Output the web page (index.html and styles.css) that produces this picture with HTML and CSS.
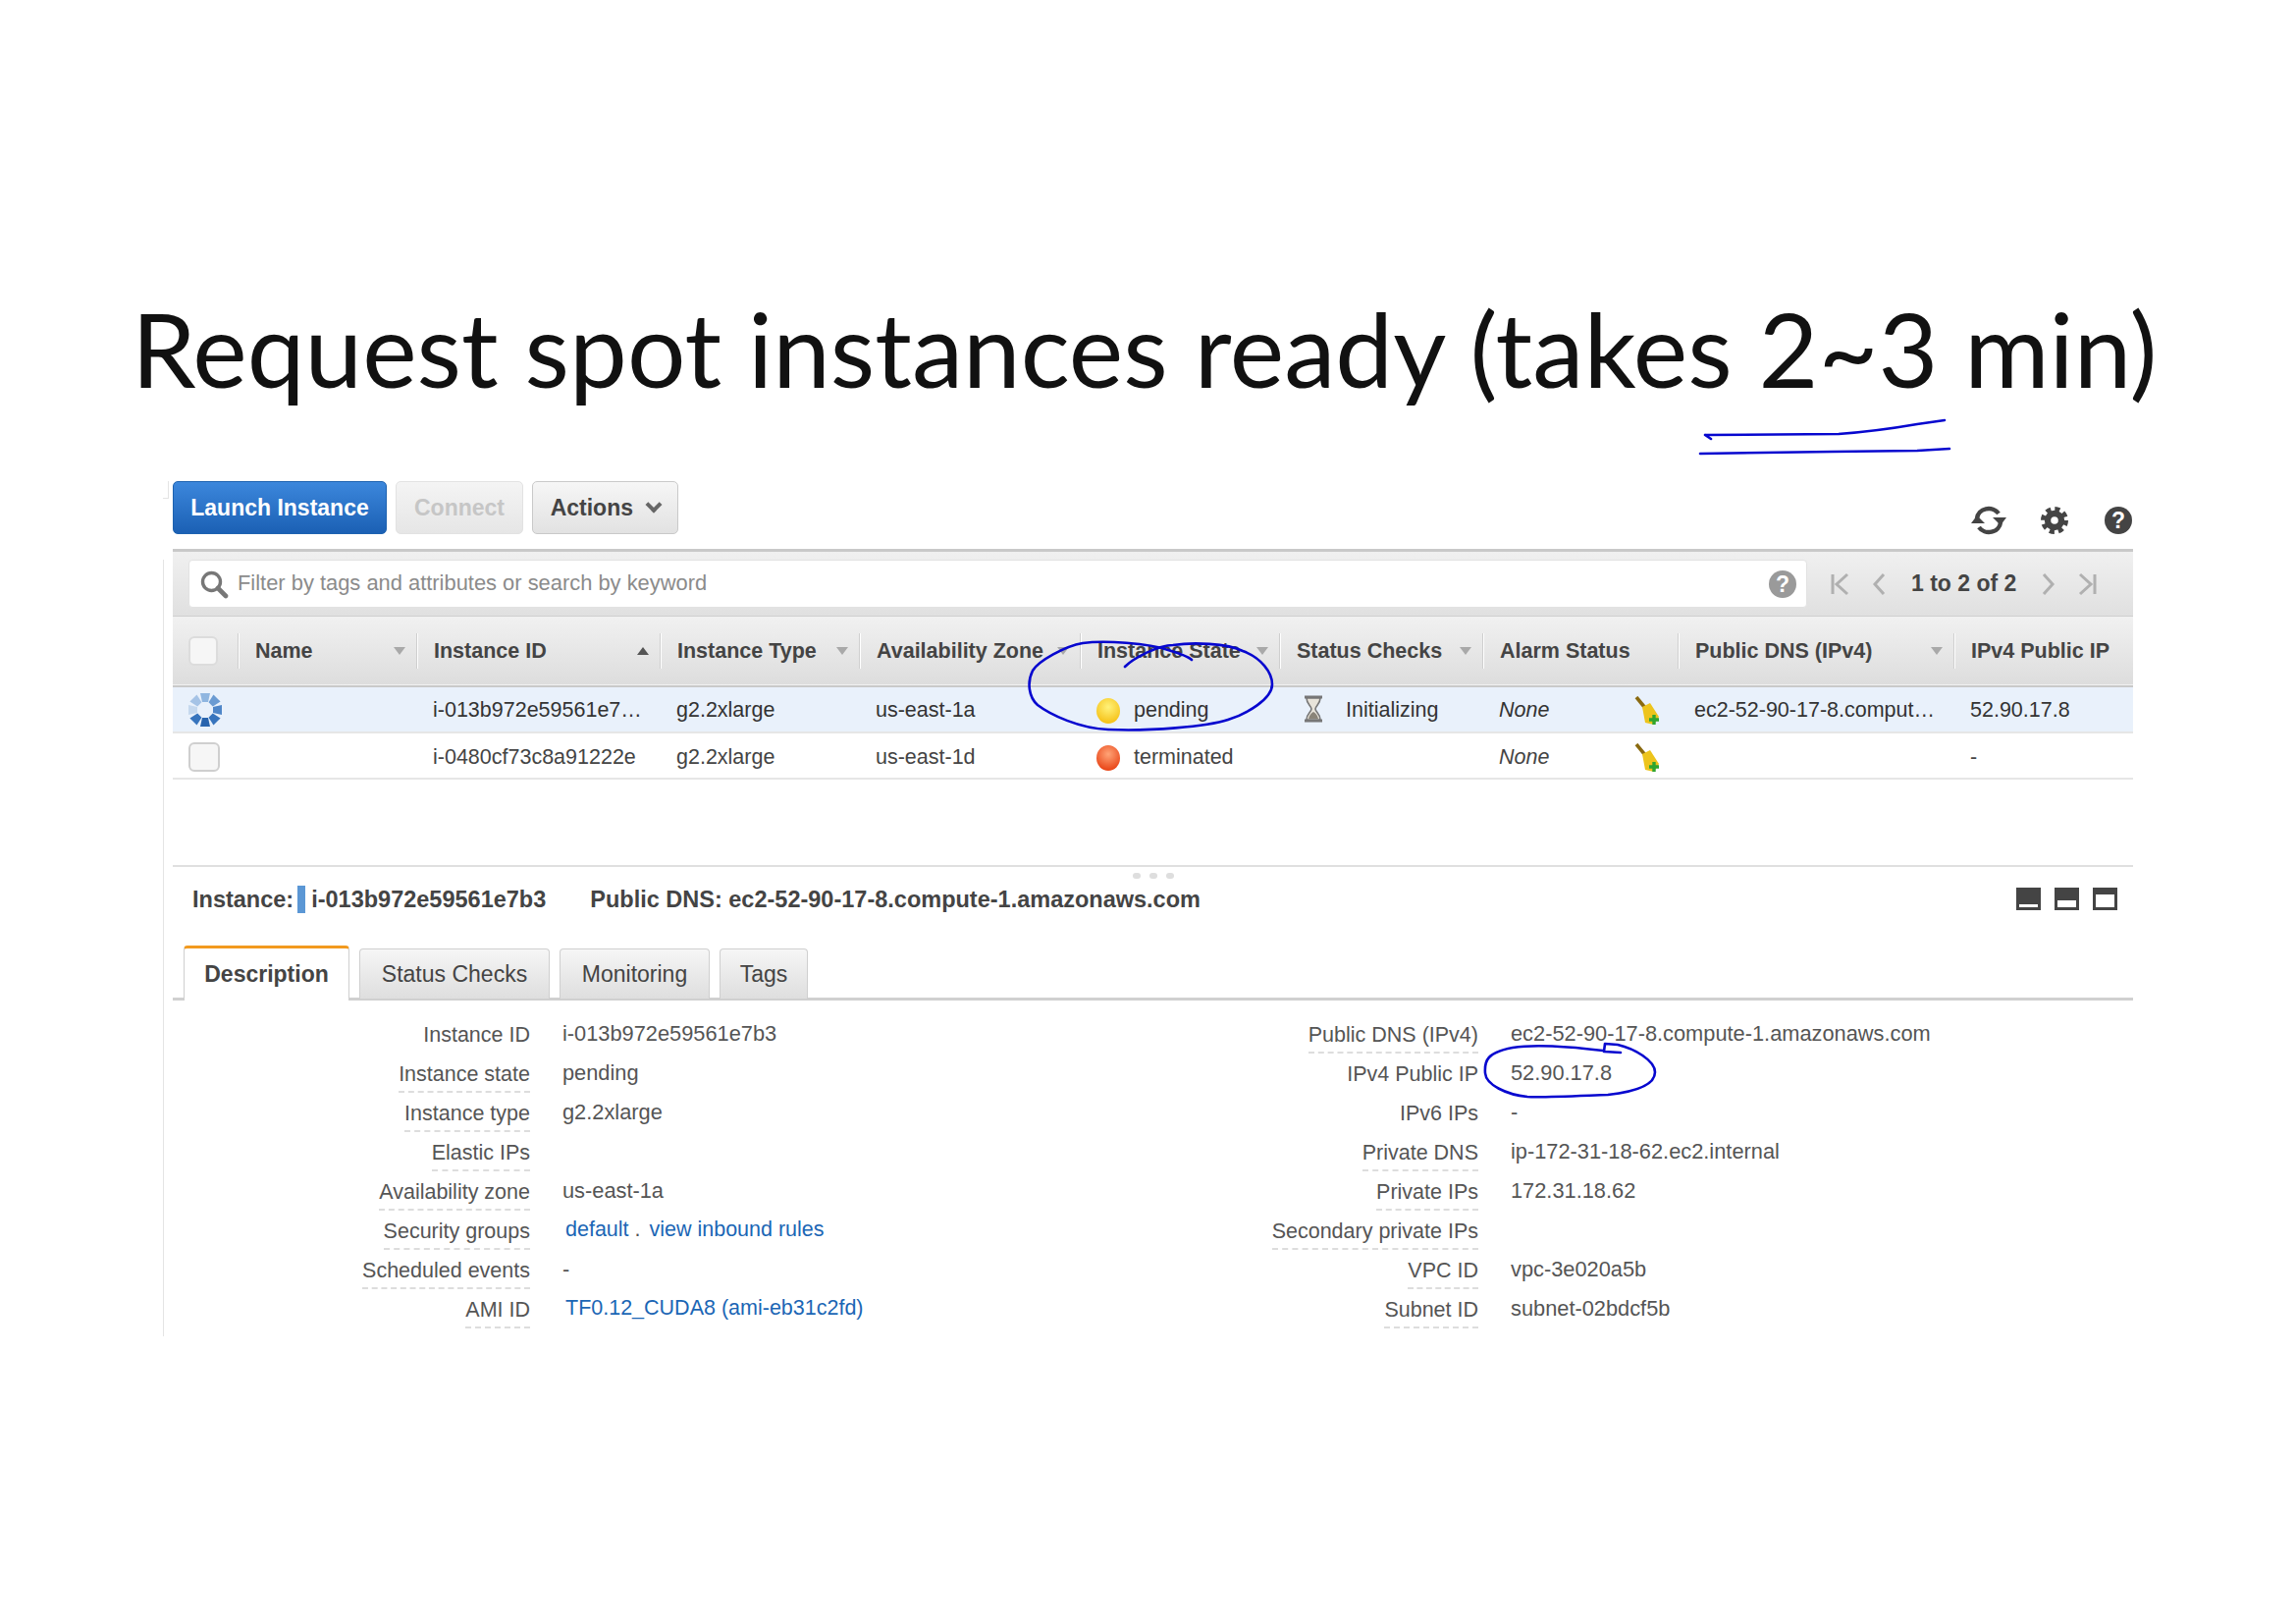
FILE: index.html
```html
<!DOCTYPE html>
<html lang="en">
<head>
    <meta charset="UTF-8">
    <title>Request spot instances ready</title>
    <link rel="stylesheet" href="styles.css">
</head>
<body>
    <div class="slide">
        <h1 class="slide-title">Request spot instances ready (takes 2~3 min)</h1>

        <div class="toolbar">
            <button class="btn btn-primary">Launch Instance</button>
            <button class="btn btn-disabled">Connect</button>
            <button class="btn btn-actions">Actions <span class="chevron"></span></button>
            <div class="toolbar-icons">
                <svg class="icon-refresh" viewBox="0 0 36 32" width="36" height="32">
                    <path d="M6 14a12 11 0 0 1 22-5" fill="none" stroke="#444" stroke-width="4.4"/>
                    <path d="M30 18a12 11 0 0 1-22 5" fill="none" stroke="#444" stroke-width="4.4"/>
                    <path d="M22 13l14 0-6 8z" fill="#444"/>
                    <path d="M14 19l-14 0 6-8z" fill="#444"/>
                </svg>
                <svg class="icon-gear" viewBox="0 0 28 28" width="28" height="28">
                    <circle cx="14" cy="14" r="7" fill="none" stroke="#444" stroke-width="6.4"/>
                    <circle cx="14" cy="14" r="11.5" fill="none" stroke="#444" stroke-width="5" stroke-dasharray="5 4.03"/>
                </svg>
                <span class="help-circle help-dark">?</span>
            </div>
        </div>

        <section class="console">
            <div class="filter-bar">
                <div class="search-box">
                    <svg viewBox="0 0 30 30" width="30" height="30">
                        <circle cx="12.5" cy="12.5" r="9" fill="none" stroke="#777" stroke-width="3.4"/>
                        <path d="M19 19l8 8" stroke="#777" stroke-width="4.6" stroke-linecap="round"/>
                    </svg>
                    <span class="search-placeholder">Filter by tags and attributes or search by keyword</span>
                    <span class="help-circle help-grey">?</span>
                </div>
                <div class="pager">
                    <svg viewBox="0 0 20 26" width="20" height="26"><path d="M2 3v20M17 3L6 13l11 10" fill="none" stroke="#b0b0b0" stroke-width="3"/></svg>
                    <svg class="pager-prev" viewBox="0 0 14 26" width="14" height="26"><path d="M12 3L3 13l9 10" fill="none" stroke="#b0b0b0" stroke-width="3"/></svg>
                    <span class="pager-text">1 to 2 of 2</span>
                    <svg class="pager-next" viewBox="0 0 14 26" width="14" height="26"><path d="M2 3l9 10-9 10" fill="none" stroke="#b0b0b0" stroke-width="3"/></svg>
                    <svg viewBox="0 0 20 26" width="20" height="26"><path d="M18 3v20M3 3l11 10L3 23" fill="none" stroke="#b0b0b0" stroke-width="3"/></svg>
                </div>
            </div>

            <table class="instances">
                <colgroup>
                    <col class="col-check">
                    <col class="col-name">
                    <col class="col-id">
                    <col class="col-type">
                    <col class="col-zone">
                    <col class="col-state">
                    <col class="col-status">
                    <col class="col-alarm">
                    <col class="col-dns">
                    <col class="col-ip">
                </colgroup>
                <thead>
                    <tr>
                        <th class="cell-check"><span class="checkbox"></span></th>
                        <th><div class="th-inner">Name <span class="sort"></span></div></th>
                        <th><div class="th-inner">Instance ID <span class="sort sort-up"></span></div></th>
                        <th><div class="th-inner">Instance Type <span class="sort"></span></div></th>
                        <th><div class="th-inner">Availability Zone <span class="sort"></span></div></th>
                        <th><div class="th-inner">Instance State <span class="sort"></span></div></th>
                        <th><div class="th-inner">Status Checks <span class="sort"></span></div></th>
                        <th><div class="th-inner">Alarm Status</div></th>
                        <th><div class="th-inner">Public DNS (IPv4) <span class="sort"></span></div></th>
                        <th class="th-last"><div class="th-inner">IPv4 Public IP</div></th>
                    </tr>
                </thead>
                <tbody>
                    <tr class="row-selected">
                        <td class="cell-check">
                            <svg viewBox="0 0 36 36" width="36" height="36">
                                <path d="M13 1h10l-2 9h-6z" fill="#8fb6e0"/>
                                <path d="M13 1h10l-2 9h-6z" transform="rotate(45 18 18)" fill="#6b9bd2"/>
                                <path d="M13 1h10l-2 9h-6z" transform="rotate(90 18 18)" fill="#4f86c8"/>
                                <path d="M13 1h10l-2 9h-6z" transform="rotate(135 18 18)" fill="#3774bd"/>
                                <path d="M13 1h10l-2 9h-6z" transform="rotate(180 18 18)" fill="#2864ae"/>
                                <path d="M13 1h10l-2 9h-6z" transform="rotate(225 18 18)" fill="#3774bd"/>
                                <path d="M13 1h10l-2 9h-6z" transform="rotate(270 18 18)" fill="#c5d8ee"/>
                                <path d="M13 1h10l-2 9h-6z" transform="rotate(315 18 18)" fill="#a5c3e6"/>
                            </svg>
                        </td>
                        <td></td>
                        <td>i-013b972e59561e7&hellip;</td>
                        <td>g2.2xlarge</td>
                        <td>us-east-1a</td>
                        <td><div class="state"><span class="orb orb-pending"></span>pending</div></td>
                        <td>
                            <div class="status">
                                <svg viewBox="0 0 24 28" width="24" height="28">
                                    <path d="M3 2h18M3 26h18" stroke="#777" stroke-width="3"/>
                                    <path d="M5 3h14c0 6-5 8-5 11s5 5 5 11H5c0-6 5-8 5-11S5 9 5 3z" fill="#e8e4da" stroke="#777" stroke-width="1.6"/>
                                    <path d="M7 24c1-4 3-6 5-7 2 1 4 3 5 7z" fill="#8a8478"/>
                                </svg>
                                Initializing
                            </div>
                        </td>
                        <td>
                            <div class="alarm">
                                <em>None</em>
                                <svg viewBox="0 0 28 30" width="28" height="30">
                                    <path d="M2 1l9 11" stroke="#8a6a10" stroke-width="3.6"/>
                                    <path d="M8 11l8-4 9 14-5 8-9-2z" fill="#edc41c"/>
                                    <path d="M20 19v10M15 24h10" stroke="#2fa52f" stroke-width="3.4"/>
                                </svg>
                            </div>
                        </td>
                        <td>ec2-52-90-17-8.comput&hellip;</td>
                        <td>52.90.17.8</td>
                    </tr>
                    <tr class="row-plain">
                        <td class="cell-check"><span class="checkbox checkbox-row"></span></td>
                        <td></td>
                        <td>i-0480cf73c8a91222e</td>
                        <td>g2.2xlarge</td>
                        <td>us-east-1d</td>
                        <td><div class="state"><span class="orb orb-terminated"></span>terminated</div></td>
                        <td></td>
                        <td>
                            <div class="alarm">
                                <em>None</em>
                                <svg viewBox="0 0 28 30" width="28" height="30">
                                    <path d="M2 1l9 11" stroke="#8a6a10" stroke-width="3.6"/>
                                    <path d="M8 11l8-4 9 14-5 8-9-2z" fill="#edc41c"/>
                                    <path d="M20 19v10M15 24h10" stroke="#2fa52f" stroke-width="3.4"/>
                                </svg>
                            </div>
                        </td>
                        <td></td>
                        <td>-</td>
                    </tr>
                </tbody>
            </table>

            <div class="instance-bar">
                <div class="drag-handle"><span></span><span></span><span></span></div>
                <span class="instance-label">Instance:</span>
                <span class="instance-mark"></span>
                <span class="instance-id">i-013b972e59561e7b3</span>
                <span class="instance-dns">Public DNS: ec2-52-90-17-8.compute-1.amazonaws.com</span>
                <div class="pane-icons">
                    <span class="pane pane-low"></span>
                    <span class="pane pane-mid"></span>
                    <span class="pane pane-high"></span>
                </div>
            </div>

            <div class="tabs">
                <div class="tab tab-active">Description</div>
                <div class="tab tab-status">Status Checks</div>
                <div class="tab tab-monitoring">Monitoring</div>
                <div class="tab tab-tags">Tags</div>
            </div>

            <div class="details">
                <div class="detail-col detail-left">
                    <div class="detail-row"><span class="detail-label plain">Instance ID</span><span class="detail-value">i-013b972e59561e7b3</span></div>
                    <div class="detail-row"><span class="detail-label">Instance state</span><span class="detail-value">pending</span></div>
                    <div class="detail-row"><span class="detail-label">Instance type</span><span class="detail-value">g2.2xlarge</span></div>
                    <div class="detail-row"><span class="detail-label">Elastic IPs</span><span class="detail-value"></span></div>
                    <div class="detail-row"><span class="detail-label">Availability zone</span><span class="detail-value">us-east-1a</span></div>
                    <div class="detail-row"><span class="detail-label">Security groups</span><span class="detail-value has-link"><a href="#">default</a> . <a href="#" class="link-rules">view inbound rules</a></span></div>
                    <div class="detail-row"><span class="detail-label">Scheduled events</span><span class="detail-value">-</span></div>
                    <div class="detail-row"><span class="detail-label">AMI ID</span><span class="detail-value has-link"><a href="#">TF0.12_CUDA8 (ami-eb31c2fd)</a></span></div>
                </div>
                <div class="detail-col">
                    <div class="detail-row"><span class="detail-label">Public DNS (IPv4)</span><span class="detail-value">ec2-52-90-17-8.compute-1.amazonaws.com</span></div>
                    <div class="detail-row"><span class="detail-label plain">IPv4 Public IP</span><span class="detail-value">52.90.17.8</span></div>
                    <div class="detail-row"><span class="detail-label plain">IPv6 IPs</span><span class="detail-value">-</span></div>
                    <div class="detail-row"><span class="detail-label">Private DNS</span><span class="detail-value">ip-172-31-18-62.ec2.internal</span></div>
                    <div class="detail-row"><span class="detail-label">Private IPs</span><span class="detail-value">172.31.18.62</span></div>
                    <div class="detail-row"><span class="detail-label">Secondary private IPs</span><span class="detail-value"></span></div>
                    <div class="detail-row"><span class="detail-label">VPC ID</span><span class="detail-value">vpc-3e020a5b</span></div>
                    <div class="detail-row"><span class="detail-label">Subnet ID</span><span class="detail-value">subnet-02bdcf5b</span></div>
                </div>
            </div>
        </section>

        <!-- pen marks drawn over the slide -->
        <svg class="ink" viewBox="0 0 2339 1654" width="2339" height="1654">
            <path d="M1737 443l6 4M1737 443L1873 442C1900 440 1930 436 1953 432L1981 428"/>
            <path d="M1732 462L1867 460L1953 459L1986 457"/>
            <path d="M1146 679C1155 670 1180 657 1195 657C1215 654 1250 655 1266 663C1285 670 1296 685 1296 697C1296 712 1270 727 1251 733C1230 740 1170 745 1129 743C1100 742 1070 728 1057 718C1048 710 1046 695 1052 683C1058 673 1085 658 1103 655C1125 652 1170 655 1190 662C1200 665 1210 668 1214 672"/>
            <path d="M1651 1072L1634 1071L1635 1063L1648 1064C1665 1068 1686 1080 1686 1092C1686 1105 1665 1112 1638 1115C1610 1116 1570 1118 1556 1117C1535 1115 1514 1105 1513 1093C1512 1080 1515 1072 1541 1067C1565 1063 1600 1066 1633 1070"/>
        </svg>
    </div>
</body>
</html>
```

FILE: styles.css
```css
* {
    margin: 0;
    padding: 0;
    box-sizing: border-box;
}

body {
    background: white;
    font-family: 'Liberation Sans', Arial, sans-serif;
    font-size: 21.5px;
    color: #444;
}

.slide {
    position: relative;
    width: 2339px;
    height: 1654px;
    overflow: hidden;
}

.slide-title {
    height: 490px;
    padding-top: 284px;
    padding-left: 134px;
    font-family: 'Lato', sans-serif;
    font-size: 105px;
    line-height: 140px;
    font-weight: 400;
    color: #111;
    white-space: nowrap;
}

/* toolbar */
.toolbar {
    position: relative;
    display: flex;
    gap: 9px;
    height: 54px;
    margin: 0 166px 15px 176px;
}

.toolbar::before {
    content: "";
    position: absolute;
    left: -10px;
    top: 0;
    width: 5px;
    height: 17px;
    border-right: 1px solid #e4e4e4;
    border-bottom: 1px solid #e4e4e4;
}

.btn {
    height: 54px;
    border-radius: 5px;
    font-family: inherit;
    font-size: 23px;
    font-weight: 700;
}

.btn-primary {
    width: 218px;
    color: white;
    border: 1px solid #1d62b0;
    background: linear-gradient(#3c87dc, #1b60b4);
}

.btn-disabled {
    width: 130px;
    color: #c6c6c6;
    border: 1px solid #e2e2e2;
    background: linear-gradient(#f4f4f4, #e6e6e6);
}

.btn-actions {
    width: 149px;
    color: #444;
    border: 1px solid #c9c9c9;
    background: linear-gradient(#f6f6f6, #e2e2e2);
}

.chevron {
    display: inline-block;
    width: 12px;
    height: 12px;
    margin: 0 0 5px 9px;
    border-right: 4px solid #666;
    border-bottom: 4px solid #666;
    transform: rotate(45deg);
}

.toolbar-icons {
    display: flex;
    align-items: center;
    margin-left: auto;
    margin-right: 1px;
    margin-top: 24px;
    height: 32px;
}

.icon-gear {
    margin: 0 37px 0 35px;
}

.help-circle {
    display: inline-block;
    width: 28px;
    height: 28px;
    border-radius: 50%;
    color: white;
    font-size: 23px;
    font-weight: 700;
    line-height: 28px;
    text-align: center;
}

.help-dark {
    background: #444;
}

.help-grey {
    background: #9a9a9a;
    margin-left: auto;
}

/* console body */
.console {
    position: relative;
    width: 1997px;
    margin-left: 176px;
}

.console::before {
    content: "";
    position: absolute;
    left: -10px;
    top: 11px;
    bottom: 0;
    border-left: 1px solid #e4e4e4;
}

.filter-bar {
    display: flex;
    align-items: center;
    height: 69px;
    padding-left: 16px;
    border-top: 3px solid #c9c9c9;
    border-bottom: 1px solid #cfcfcf;
    background: linear-gradient(#f0f0f0, #e0e0e0);
}

.search-box {
    display: flex;
    align-items: center;
    width: 1649px;
    height: 49px;
    padding: 0 10px;
    background: white;
    border: 1px solid #e2e2e2;
    border-radius: 4px;
}

.search-placeholder {
    margin: -2px 0 0 9px;
    font-size: 21.9px;
    color: #8b8b8b;
}

.pager {
    display: flex;
    align-items: center;
    margin-left: 24px;
}

.pager-prev {
    margin-left: 22px;
}

.pager-text {
    margin: 0 26px;
    font-size: 23px;
    font-weight: 700;
    color: #444;
}

.pager-next {
    margin-right: 22px;
}

/* instances table */
.instances {
    width: 1997px;
    table-layout: fixed;
    border-collapse: collapse;
}

.col-check { width: 66px; }
.col-name { width: 182px; }
.col-id { width: 248px; }
.col-type { width: 203px; }
.col-zone { width: 225px; }
.col-state { width: 203px; }
.col-status { width: 207px; }
.col-alarm { width: 199px; }
.col-dns { width: 281px; }
.col-ip { width: 183px; }

.instances thead tr {
    height: 71px;
    background: linear-gradient(#f1f1f1, #dddddd);
    border-bottom: 2px solid #c9c9c9;
}

.instances th {
    padding: 0;
    text-align: left;
    font-weight: 700;
    color: #444;
}

.th-inner {
    display: flex;
    align-items: center;
    justify-content: space-between;
    height: 36px;
    padding: 0 11px 0 17px;
    border-left: 1px solid #cfcfcf;
    box-shadow: inset 1px 0 0 #fff;
    white-space: nowrap;
}

.sort {
    width: 0;
    height: 0;
    border-left: 6px solid transparent;
    border-right: 6px solid transparent;
    border-top: 8px solid #a9a9a9;
}

.sort-up {
    border-top: none;
    border-bottom: 8px solid #555;
}

.instances td {
    padding: 2px 0 0 17px;
    white-space: nowrap;
    overflow: hidden;
}

.instances tbody tr {
    height: 47px;
    border-bottom: 2px solid #e6e6e6;
}

.row-selected {
    background: #e9f1fb;
    color: #333;
}

.instances .row-plain td {
    padding-top: 4px;
}

.instances .cell-check,
.instances .row-plain .cell-check {
    padding: 0 0 0 16px;
}

.cell-check svg {
    display: block;
    margin: 1px 0 0 -1px;
}

.checkbox {
    display: block;
    width: 30px;
    height: 30px;
    border: 2px solid #dcdcdc;
    border-radius: 6px;
    background: #f6f6f6;
}

.checkbox-row {
    width: 32px;
    border-color: #cfcfcf;
    margin-top: 2px;
}

.state {
    display: flex;
    align-items: center;
}

.orb {
    width: 24px;
    height: 26px;
    margin-right: 14px;
    border-radius: 50%;
}

.orb-pending {
    background: radial-gradient(circle at 50% 35%, #fff27a, #f6c41c 75%);
}

.orb-terminated {
    background: radial-gradient(circle at 50% 35%, #ffa477, #ea4a1c 75%);
}

.status {
    display: flex;
    align-items: center;
    gap: 21px;
    padding-left: 6px;
}

.status svg {
    margin-bottom: 4px;
}

.alarm {
    display: flex;
    align-items: center;
    justify-content: space-between;
    padding-right: 16px;
}

/* instance summary */
.instance-bar {
    position: relative;
    display: flex;
    align-items: center;
    height: 82px;
    margin-top: 87px;
    padding: 0 16px 14px 20px;
    border-top: 2px solid #e0e0e0;
    font-size: 23.5px;
    font-weight: 700;
}

.drag-handle {
    position: absolute;
    top: 6px;
    left: 50%;
    display: flex;
    gap: 9px;
    transform: translateX(-50%);
}

.drag-handle span {
    width: 8px;
    height: 6px;
    border-radius: 3px;
    background: #dedede;
}

.instance-mark {
    width: 8px;
    height: 28px;
    margin: 0 6px 0 4px;
    background: #5b97d5;
}

.instance-dns {
    margin-left: 45px;
}

.pane-icons {
    display: flex;
    gap: 14px;
    margin: -1px 0 0 auto;
}

.pane {
    width: 25px;
    height: 23px;
    background: #444;
    position: relative;
}

.pane::after {
    content: "";
    position: absolute;
    left: 3px;
    right: 3px;
    bottom: 3px;
    background: white;
}

.pane-low::after { height: 3px; }
.pane-mid::after { height: 7px; }
.pane-high::after { height: 13px; }

/* tabs */
.tabs {
    display: flex;
    align-items: flex-end;
    gap: 10px;
    height: 56px;
    padding-left: 11px;
    border-bottom: 3px solid #d0d0d0;
}

.tab {
    display: flex;
    align-items: center;
    justify-content: center;
    height: 51px;
    margin-bottom: -1px;
    border: 1px solid #cfcfcf;
    border-bottom: none;
    border-radius: 4px 4px 0 0;
    background: linear-gradient(#f6f6f6, #dedede);
    font-size: 23px;
}

.tab-active {
    width: 169px;
    height: 56px;
    margin-bottom: -3px;
    border-top: 3px solid #f29a1f;
    background: white;
    font-weight: 700;
}

.tab-status { width: 194px; }
.tab-monitoring { width: 153px; }
.tab-tags { width: 90px; }

/* detail columns */
.details {
    display: flex;
    padding: 15px 0 7px;
}

.detail-col {
    width: 1031px;
}

.detail-left {
    width: 966px;
}

.detail-row {
    display: grid;
    grid-template-columns: 364px 1fr;
    height: 40px;
    align-items: center;
}

.detail-label {
    position: relative;
    justify-self: end;
    color: #555;
}

.detail-label::after {
    content: "";
    position: absolute;
    left: 0;
    right: 0;
    bottom: -6px;
    border-bottom: 2px dashed #ddd;
}

.detail-label.plain::after {
    border-bottom: none;
}

.detail-value {
    padding-left: 33px;
    margin-top: -3px;
    font-size: 21.8px;
    color: #555;
    white-space: nowrap;
}

.has-link {
    padding-left: 36px;
    font-size: 21.5px;
}

.detail-value a {
    color: #1b66b5;
    text-decoration: none;
}

.link-rules {
    margin-left: 3px;
}

/* pen marks */
.ink {
    position: absolute;
    left: 0;
    top: 0;
    pointer-events: none;
}

.ink path {
    fill: none;
    stroke: #0707cf;
    stroke-width: 2.6;
    stroke-linecap: round;
    stroke-linejoin: round;
}
```
